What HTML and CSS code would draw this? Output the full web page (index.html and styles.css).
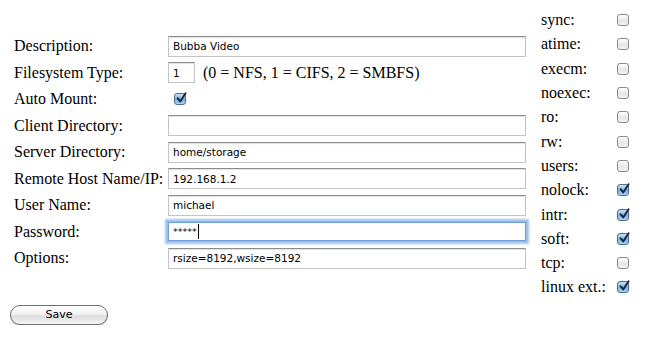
FILE: index.html
```html
<!DOCTYPE html>
<html lang="en">
<head>
  <meta charset="UTF-8">
  <title>Network Mount</title>
  <link rel="stylesheet" href="styles.css">
</head>
<body>

<div class="layout">
  <div class="mount-form">
    <label class="field-label">Description:</label>
    <div class="field"><input class="text-input" type="text" value="Bubba Video"></div>

    <label class="field-label">Filesystem Type:</label>
    <div class="field">
      <input class="text-input small" type="text" value="1">
      <span class="hint">(0 = NFS, 1 = CIFS, 2 = SMBFS)</span>
    </div>

    <label class="field-label">Auto Mount:</label>
    <div class="field"><span class="box checked auto"><svg viewBox="0 0 12 12"><path d="M2.6 6.2 L5.2 9.4 L10.6 1.2"/></svg></span></div>

    <label class="field-label">Client Directory:</label>
    <div class="field"><input class="text-input" type="text" value=""></div>

    <label class="field-label">Server Directory:</label>
    <div class="field"><input class="text-input" type="text" value="home/storage"></div>

    <label class="field-label">Remote Host Name/IP:</label>
    <div class="field"><input class="text-input" type="text" value="192.168.1.2"></div>

    <label class="field-label">User Name:</label>
    <div class="field"><input class="text-input" type="text" value="michael"></div>

    <label class="field-label">Password:</label>
    <div class="field"><div class="text-input focused"><span class="stars">*****</span><span class="caret"></span></div></div>

    <label class="field-label">Options:</label>
    <div class="field"><input class="text-input" type="text" value="rsize=8192,wsize=8192"></div>
  </div>

  <div class="options-list">
    <span class="opt-label">sync:</span><span class="box"></span>
    <span class="opt-label">atime:</span><span class="box"></span>
    <span class="opt-label">execm:</span><span class="box"></span>
    <span class="opt-label">noexec:</span><span class="box"></span>
    <span class="opt-label">ro:</span><span class="box"></span>
    <span class="opt-label">rw:</span><span class="box"></span>
    <span class="opt-label">users:</span><span class="box"></span>
    <span class="opt-label">nolock:</span><span class="box checked"><svg viewBox="0 0 12 12"><path d="M2.6 6.2 L5.2 9.4 L10.6 1.2"/></svg></span>
    <span class="opt-label">intr:</span><span class="box checked"><svg viewBox="0 0 12 12"><path d="M2.6 6.2 L5.2 9.4 L10.6 1.2"/></svg></span>
    <span class="opt-label">soft:</span><span class="box checked"><svg viewBox="0 0 12 12"><path d="M2.6 6.2 L5.2 9.4 L10.6 1.2"/></svg></span>
    <span class="opt-label">tcp:</span><span class="box"></span>
    <span class="opt-label">linux ext.:</span><span class="box checked"><svg viewBox="0 0 12 12"><path d="M2.6 6.2 L5.2 9.4 L10.6 1.2"/></svg></span>
  </div>
</div>

<button class="save-btn">Save</button>

</body>
</html>
```

FILE: styles.css
```css
body { margin: 8px; font-family: "Liberation Serif", "Times New Roman", serif; font-size: 16px; color: #000; background: #fff; }

.layout { display: flex; align-items: flex-start; }

.mount-form {
  display: grid;
  grid-template-columns: 154px 358px;
  grid-auto-rows: 26.5px;
  align-items: center;
  margin-top: 25px;
  padding-left: 6px;
  width: 519px;
}
.field-label { white-space: nowrap; }
.field { display: flex; align-items: center; }

.text-input {
  box-sizing: border-box;
  width: 358px;
  height: 21px;
  margin: 0;
  padding: 0 4px;
  font-family: "DejaVu Sans", Verdana, sans-serif;
  font-size: 10.5px;
  color: #000;
  background: #fff;
  border: 1px solid #c4c4c4;
  border-top-color: #8c8c8c;
  box-shadow: inset 0 1px 1px rgba(0,0,0,0.12);
  outline: none;
}
.text-input.small { width: 27px; }
.hint { margin-left: 8px; }

.text-input.focused {
  display: flex;
  align-items: center;
  height: 19px;
  border-color: #6f9fd6;
  box-shadow: 0 0 0 1px #94bde8, 0 0 2px 3px rgba(100,155,220,0.6);
}
.stars { font-size: 9.5px; }
.caret { display: inline-block; width: 1px; height: 15px; background: #000; margin-left: 1px; }

.box {
  box-sizing: border-box;
  display: inline-block;
  position: relative;
  width: 12px;
  height: 12px;
  border: 1px solid #8a8a8a;
  border-radius: 3px;
  background: linear-gradient(#ffffff, #e6e6e6 60%, #f4f4f4);
}
.box.checked {
  border-color: #4f6f95;
  background: linear-gradient(#c9e1f8, #78b0e6 55%, #a9d0f4);
}
.box svg { position: absolute; left: 0; top: -2px; width: 12px; height: 12px; overflow: visible; }
.box svg path { fill: none; stroke: #1c2230; stroke-width: 1.9; stroke-linecap: round; stroke-linejoin: round; }
.box.auto { margin-left: 6px; }

.options-list {
  display: grid;
  grid-template-columns: 76px 14px;
  grid-auto-rows: 24.3px;
  align-items: center;
  margin-left: 8px;
}

.save-btn {
  display: block;
  margin: 5px 0 0 2px;
  width: 98px;
  height: 20px;
  padding: 0;
  font-family: "DejaVu Sans", Verdana, sans-serif;
  font-size: 11px;
  color: #000;
  border: 1px solid #6e6e6e;
  border-radius: 10px;
  background: linear-gradient(#ffffff, #f2f2f2 45%, #dcdcdc 55%, #f6f6f6);
  box-shadow: 0 1px 1px rgba(0,0,0,0.25);
}
```
